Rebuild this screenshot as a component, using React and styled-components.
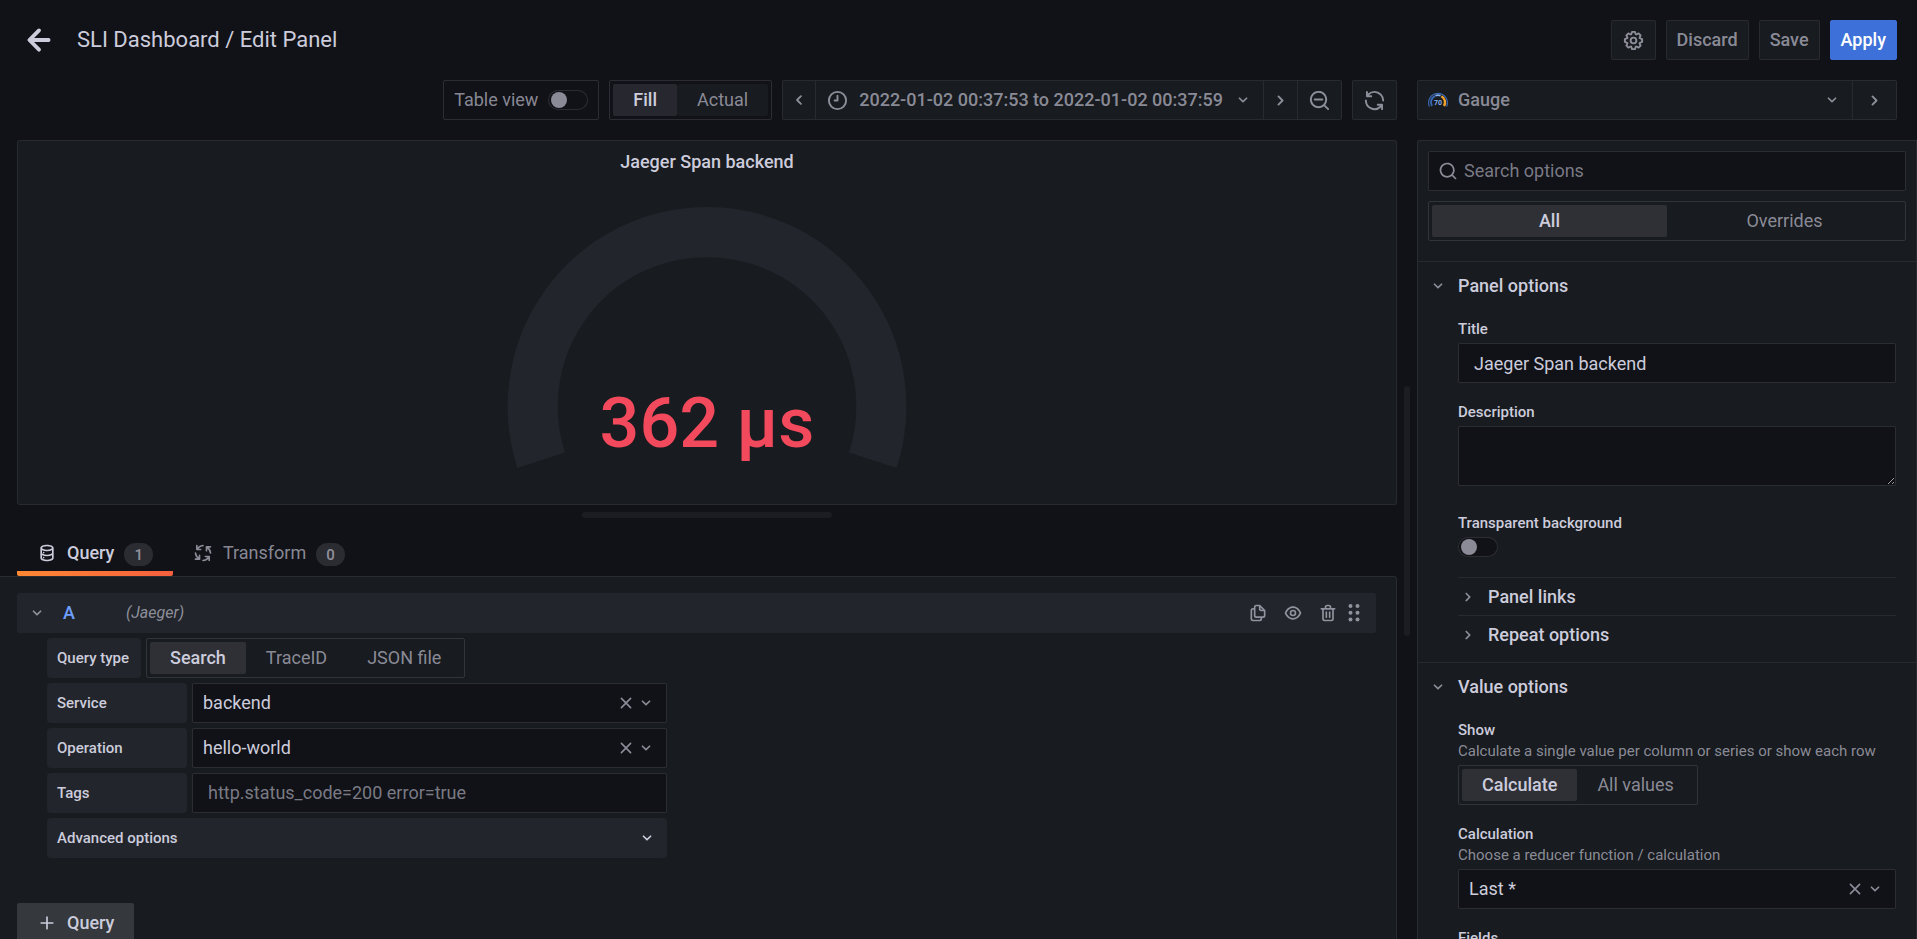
import React, { useState } from "react";
import styled, { createGlobalStyle, css, ThemeProvider } from "styled-components";

const theme = {
  canvas: "#111217",
  primary: "#181b1f",
  secondary: "#22252b",
  text: "rgb(204, 204, 220)",
  textMuted: "rgba(204, 204, 220, 0.65)",
  textDisabled: "rgba(204, 204, 220, 0.57)",
  borderWeak: "rgba(204, 204, 220, 0.09)",
  border: "rgba(204, 204, 220, 0.15)",
  active: "rgba(204, 204, 220, 0.12)",
};

const GlobalStyle = createGlobalStyle`
  *, *::before, *::after { box-sizing: border-box; }
  body {
    margin: 0;
    background: ${theme.canvas};
    color: ${theme.text};
    font-family: Roboto, "Liberation Sans", sans-serif;
    font-size: 18px;
    line-height: 24px;
  }
  button, input, select, textarea { font: inherit; color: inherit; margin: 0; }
  h1, h2, h3, p { margin: 0; font: inherit; }
`;

/* ---------- icons ---------- */

const paths = {
  arrowLeft:
    "M17,11H9.41l3.3-3.29a1,1,0,1,0-1.42-1.42l-5,5a1,1,0,0,0-.21.33,1,1,0,0,0,0,.76,1,1,0,0,0,.21.33l5,5a1,1,0,0,0,1.42,0,1,1,0,0,0,0-1.42L9.41,13H17a1,1,0,0,0,0-2Z",
  angleDown:
    "M17,9.17a1,1,0,0,0-1.41,0L12,12.71,8.46,9.17a1,1,0,0,0-1.41,0,1,1,0,0,0,0,1.42l4.24,4.24a1,1,0,0,0,1.42,0L17,10.59A1,1,0,0,0,17,9.17Z",
  angleRight:
    "M14.83,11.29,10.59,7.05a1,1,0,0,0-1.42,0,1,1,0,0,0,0,1.41L12.71,12,9.17,15.54a1,1,0,0,0,0,1.41,1,1,0,0,0,.71.29,1,1,0,0,0,.71-.29l4.24-4.24A1,1,0,0,0,14.83,11.29Z",
  angleLeft:
    "M11.29,12l3.54-3.54a1,1,0,0,0,0-1.41,1,1,0,0,0-1.42,0L9.17,11.29a1,1,0,0,0,0,1.42L13.41,17a1,1,0,0,0,.71.29,1,1,0,0,0,.71-.29,1,1,0,0,0,0-1.41Z",
  cog: "M21.32,9.55l-1.89-.63.89-1.78A1,1,0,0,0,20.13,6L18,3.87a1,1,0,0,0-1.15-.19l-1.78.89-.63-1.89A1,1,0,0,0,13.5,2h-3a1,1,0,0,0-.95.68L8.92,4.57,7.14,3.68A1,1,0,0,0,6,3.87L3.87,6a1,1,0,0,0-.19,1.15l.89,1.78-1.89.63A1,1,0,0,0,2,10.5v3a1,1,0,0,0,.68.95l1.89.63-.89,1.78A1,1,0,0,0,3.87,18L6,20.13a1,1,0,0,0,1.15.19l1.78-.89.63,1.89a1,1,0,0,0,.95.68h3a1,1,0,0,0,.95-.68l.63-1.89,1.78.89A1,1,0,0,0,18,20.13L20.13,18a1,1,0,0,0,.19-1.15l-.89-1.78,1.89-.63A1,1,0,0,0,22,13.5v-3A1,1,0,0,0,21.32,9.55ZM20,12.78l-1.2.4A2,2,0,0,0,17.64,16l.57,1.14-1.1,1.1L16,17.64a2,2,0,0,0-2.79,1.16l-.4,1.2H11.22l-.4-1.2A2,2,0,0,0,8,17.64l-1.14.57-1.1-1.1L6.36,16A2,2,0,0,0,5.2,13.18L4,12.78V11.22l1.2-.4A2,2,0,0,0,6.36,8L5.79,6.89l1.1-1.1L8,6.36A2,2,0,0,0,10.82,5.2l.4-1.2h1.56l.4,1.2A2,2,0,0,0,16,6.36l1.14-.57,1.1,1.1L17.64,8a2,2,0,0,0,1.16,2.79l1.2.4ZM12,8a4,4,0,1,0,4,4A4,4,0,0,0,12,8Zm0,6a2,2,0,1,1,2-2A2,2,0,0,1,12,14Z",
  clock:
    "M12,2A10,10,0,1,0,22,12,10,10,0,0,0,12,2Zm0,18a8,8,0,1,1,8-8A8,8,0,0,1,12,20ZM12,6a1,1,0,0,0-1,1v4H9a1,1,0,0,0,0,2h3a1,1,0,0,0,1-1V7A1,1,0,0,0,12,6Z",
  search:
    "M21.71,20.29,18,16.61A9,9,0,1,0,16.61,18l3.68,3.68a1,1,0,0,0,1.42,0A1,1,0,0,0,21.71,20.29ZM11,18a7,7,0,1,1,7-7A7,7,0,0,1,11,18Z",
  searchMinus:
    "M21.71,20.29,18,16.61A9,9,0,1,0,16.61,18l3.68,3.68a1,1,0,0,0,1.42,0A1,1,0,0,0,21.71,20.29ZM11,18a7,7,0,1,1,7-7A7,7,0,0,1,11,18Zm4-8H7a1,1,0,0,0,0,2h8a1,1,0,0,0,0-2Z",
  sync: "M19.91,15.51H15.38a1,1,0,0,0,0,2h2.4A8,8,0,0,1,4,12a1,1,0,0,0-2,0,10,10,0,0,0,16.88,7.23V21a1,1,0,0,0,2,0V16.5A1,1,0,0,0,19.91,15.51ZM12,2A10,10,0,0,0,5.12,4.77V3a1,1,0,0,0-2,0V7.5a1,1,0,0,0,1,1h4.5a1,1,0,0,0,0-2H6.22A8,8,0,0,1,20,12a1,1,0,0,0,2,0A10,10,0,0,0,12,2Z",
  copy: "M21,8.94a1.31,1.31,0,0,0-.06-.27l0-.09a1.07,1.07,0,0,0-.19-.28h0l-6-6h0a1.07,1.07,0,0,0-.28-.19.32.32,0,0,0-.09,0A.88.88,0,0,0,14.05,2H10A3,3,0,0,0,7,5V6H6A3,3,0,0,0,3,9V19a3,3,0,0,0,3,3h8a3,3,0,0,0,3-3V18h1a3,3,0,0,0,3-3V9S21,9,21,8.94ZM15,5.41,17.59,8H16a1,1,0,0,1-1-1ZM15,19a1,1,0,0,1-1,1H6a1,1,0,0,1-1-1V9A1,1,0,0,1,6,8H7v7a3,3,0,0,0,3,3h5Zm4-4a1,1,0,0,1-1,1H10a1,1,0,0,1-1-1V5a1,1,0,0,1,1-1h3V7a3,3,0,0,0,3,3h3Z",
  eye: "M21.92,11.6C19.9,6.91,16.1,4,12,4S4.1,6.91,2.08,11.6a1,1,0,0,0,0,.8C4.1,17.09,7.9,20,12,20s7.9-2.91,9.92-7.6A1,1,0,0,0,21.92,11.6ZM12,18c-3.17,0-6.17-2.29-7.9-6C5.83,8.29,8.83,6,12,6s6.17,2.29,7.9,6C18.17,15.71,15.17,18,12,18ZM12,8a4,4,0,1,0,4,4A4,4,0,0,0,12,8Zm0,6a2,2,0,1,1,2-2A2,2,0,0,1,12,14Z",
  trash:
    "M10,18a1,1,0,0,0,1-1V11a1,1,0,0,0-2,0v6A1,1,0,0,0,10,18ZM20,6H16V5a3,3,0,0,0-3-3H11A3,3,0,0,0,8,5V6H4A1,1,0,0,0,4,8H5V19a3,3,0,0,0,3,3h8a3,3,0,0,0,3-3V8h1a1,1,0,0,0,0-2ZM10,5a1,1,0,0,1,1-1h2a1,1,0,0,1,1,1V6H10Zm7,14a1,1,0,0,1-1,1H8a1,1,0,0,1-1-1V8H17Zm-3-1a1,1,0,0,0,1-1V11a1,1,0,0,0-2,0v6A1,1,0,0,0,14,18Z",
  database:
    "M8,16.5a1,1,0,1,0,1,1A1,1,0,0,0,8,16.5ZM12,2C8,2,4,3.37,4,6V18c0,2.63,4,4,8,4s8-1.37,8-4V6C20,3.37,16,2,12,2Zm6,16c0,.71-2.28,2-6,2s-6-1.29-6-2V14.73A13.16,13.16,0,0,0,12,16a13.16,13.16,0,0,0,6-1.27Zm0-6c0,.71-2.28,2-6,2s-6-1.29-6-2V8.73A13.16,13.16,0,0,0,12,10a13.16,13.16,0,0,0,6-1.27ZM12,8C8.28,8,6,6.71,6,6s2.28-2,6-2,6,1.29,6,2S15.72,8,12,8ZM8,10.5a1,1,0,1,0,1,1A1,1,0,0,0,8,10.5Z",
  plus: "M19,11H13V5a1,1,0,0,0-2,0v6H5a1,1,0,0,0,0,2h6v6a1,1,0,0,0,2,0V13h6a1,1,0,0,0,0-2Z",
};

const Svg = styled.svg`
  display: block;
  flex: none;
`;

const Icon = ({ name, size = 20 }) => (
  <Svg width={size} height={size} viewBox="0 0 24 24" fill="currentColor" aria-hidden="true">
    <path d={paths[name]} />
  </Svg>
);

const TimesIcon = () => (
  <Svg width="20" height="20" viewBox="0 0 24 24" stroke="currentColor" strokeWidth="2" strokeLinecap="round" aria-hidden="true">
    <path d="M6.5 6.5l11 11M17.5 6.5l-11 11" />
  </Svg>
);

const DotsIcon = () => (
  <Svg width="14" height="20" viewBox="0 0 14 20" fill="currentColor" aria-hidden="true">
    {[3.5, 10.5].map((x) => [3, 9.7, 16.4].map((y) => <circle key={`${x}-${y}`} cx={x} cy={y} r="2" />))}
  </Svg>
);

const ProcessIcon = () => (
  <Svg width="20" height="20" viewBox="0 0 24 24" fill="none" stroke="currentColor" strokeWidth="2" strokeLinecap="round" strokeLinejoin="round" aria-hidden="true">
    {[0, 90, 180, 270].map((turn) => (
      <path key={turn} transform={`rotate(${turn} 12 12)`} d="M4.6 3v4.8h4.6M5 7.4A9 9 0 0 1 12 3" />
    ))}
  </Svg>
);

const GaugeLogo = () => (
  <Svg width="20" height="20" viewBox="0 0 20 20" fill="none" aria-hidden="true">
    <path d="M1.4 16.6A9.4 9.4 0 1 1 18.6 16.6" stroke="#3865ab" strokeWidth="1.2" />
    <path d="M4 16A7 7 0 0 1 7 6" stroke="#3865ab" strokeWidth="2" />
    <path d="M7.4 5.7a7 7 0 0 1 5.2 0" stroke="#84aff1" strokeWidth="1.8" />
    <path d="M13.4 6.2A7 7 0 0 1 16 16" stroke="#f2a32c" strokeWidth="2.4" />
    <text x="10" y="14.6" textAnchor="middle" fontSize="7" fontWeight="700" fill="#84aff1">70</text>
  </Svg>
);

/* ---------- shared controls ---------- */

const buttonReset = css`
  display: flex;
  align-items: center;
  border: 0;
  padding: 0;
  background: none;
  cursor: pointer;
`;

const ToolbarButton = styled.button`
  ${buttonReset}
  flex: none;
  justify-content: center;
  height: 40px;
  padding: 0 10px;
  border: 1px solid ${(p) => (p.$primary ? "#3d71d9" : p.theme.borderWeak)};
  border-radius: 2px;
  background: ${(p) => (p.$primary ? "#3d71d9" : p.theme.primary)};
  color: ${(p) => (p.$primary ? "#fff" : p.theme.textMuted)};
  font-weight: 500;
  white-space: nowrap;
`;

const ButtonGroup = styled.div`
  display: flex;
  min-width: 0;
  & > button { border-radius: 0; }
  & > button + button { border-left: 0; }
  & > button:first-child { border-radius: 2px 0 0 2px; }
  & > button:last-child { border-radius: 0 2px 2px 0; }
`;

const StepButton = styled(ToolbarButton)`
  padding: 0 5px;
`;

const TimeButton = styled(ToolbarButton)`
  gap: 10px;
`;

const VizButton = styled(ToolbarButton)`
  flex: 1;
  gap: 10px;
  justify-content: flex-start;
`;

const Grow = styled.span`
  flex: 1;
  min-width: 0;
  text-align: left;
`;

const IconButton = styled.button`
  ${buttonReset}
  color: ${(p) => p.theme.textMuted};
`;

const Switch = styled.input`
  appearance: none;
  display: block;
  flex: none;
  width: 40px;
  height: 20px;
  padding: 1px 2px;
  border: 1px solid ${(p) => p.theme.border};
  border-radius: 10px;
  background: ${(p) => p.theme.canvas};
  cursor: pointer;
  &::before {
    content: "";
    display: block;
    width: 16px;
    height: 16px;
    border-radius: 50%;
    background: #8b8a97;
  }
  &:checked::before { margin-left: auto; }
`;

const RadioBox = styled.div`
  display: flex;
  width: ${(p) => (p.$full ? "100%" : "max-content")};
  height: 40px;
  padding: 3px;
  border: 1px solid ${(p) => p.theme.border};
  border-radius: 2px;
`;

const RadioLabel = styled.label`
  display: flex;
  flex: ${(p) => (p.$full ? "1" : "none")};
  align-items: center;
  justify-content: center;
  padding: 0 20px;
  border-radius: 2px;
  background: ${(p) => (p.$filled ? p.theme.primary : "none")};
  color: ${(p) => p.theme.textMuted};
  cursor: pointer;
  &:has(input:checked) {
    background: ${(p) => p.theme.active};
    color: ${(p) => p.theme.text};
    font-weight: 500;
  }
`;

const HiddenRadio = styled.input`
  position: absolute;
  opacity: 0;
  width: 1px;
  height: 1px;
`;

const RadioGroup = ({ name, label, options, full, filled }) => {
  const [value, setValue] = useState(options[0]);
  return (
    <RadioBox role="radiogroup" aria-label={label} $full={full}>
      {options.map((option) => (
        <RadioLabel key={option} $full={full} $filled={filled}>
          <HiddenRadio type="radio" name={name} checked={value === option} onChange={() => setValue(option)} />
          {option}
        </RadioLabel>
      ))}
    </RadioBox>
  );
};

const fieldBox = css`
  width: 100%;
  border: 1px solid ${(p) => p.theme.border};
  border-radius: 2px;
  background: ${(p) => p.theme.canvas};
`;

const TextInput = styled.input`
  ${fieldBox}
  display: block;
  height: 40px;
  padding: 0 15px;
  outline: none;
  &::placeholder { color: ${(p) => p.theme.textDisabled}; opacity: 1; }
`;

const TextArea = styled.textarea`
  ${fieldBox}
  display: block;
  height: 60px;
  margin-bottom: 8px;
  padding: 5px 10px;
  resize: vertical;
  outline: none;
`;

const SelectBox = styled.div`
  ${fieldBox}
  display: flex;
  align-items: center;
  height: 40px;
  padding-right: 10px;
  color: ${(p) => p.theme.textMuted};
`;

const NativeSelect = styled.select`
  appearance: none;
  flex: 1;
  min-width: 0;
  height: 38px;
  padding: 0 10px;
  border: 0;
  outline: none;
  background: none;
  color: ${(p) => p.theme.text};
`;

const Select = ({ id, value }) => (
  <SelectBox>
    <NativeSelect id={id} defaultValue={value}>
      <option>{value}</option>
    </NativeSelect>
    <IconButton type="button" aria-label="Clear value"><TimesIcon /></IconButton>
    <Icon name="angleDown" />
  </SelectBox>
);

/* ---------- page frame ---------- */

const Page = styled.div`
  display: flex;
  flex-direction: column;
  height: 100vh;
  overflow: hidden;
`;

const Header = styled.header`
  display: flex;
  align-items: center;
  gap: 10px;
  flex: none;
  padding: 20px 20px 20px 16px;
`;

const BackButton = styled.button`
  ${buttonReset}
  justify-content: center;
  height: 40px;
  color: ${(p) => p.theme.text};
`;

const PageTitle = styled.h1`
  flex: 1;
  padding-left: 5px;
  font-size: 22px;
  line-height: 30px;
`;

const Body = styled.div`
  display: flex;
  flex: 1;
  min-height: 0;
`;

const MainColumn = styled.main`
  display: flex;
  flex: 1;
  flex-direction: column;
  min-width: 0;
`;

const Toolbar = styled.div`
  display: flex;
  flex: none;
  justify-content: flex-end;
  gap: 10px;
  padding-bottom: 20px;
`;

const TableViewBox = styled.label`
  display: flex;
  align-items: center;
  gap: 10px;
  height: 40px;
  padding: 0 10px;
  border: 1px solid ${(p) => p.theme.border};
  border-radius: 2px;
  color: ${(p) => p.theme.textMuted};
`;

const PanelCard = styled.section`
  display: flex;
  flex: 1;
  flex-direction: column;
  align-items: center;
  min-height: 0;
  margin-left: 17px;
  border: 1px solid ${(p) => p.theme.borderWeak};
  border-radius: 3px;
  background: ${(p) => p.theme.primary};
`;

const PanelTitle = styled.h2`
  padding: 9px 8px 7px;
  font-size: 18px;
  font-weight: 500;
`;

const GaugeSvg = styled.svg`
  display: block;
  flex: 1;
  width: 100%;
  min-height: 0;
  padding: 26px 0 34px;
`;

const GaugeChart = () => (
  <GaugeSvg viewBox="0 0 400 262" role="img" aria-label="362 µs">
    <path d="M34.5 252.8A174 174 0 1 1 365.5 252.8" fill="none" stroke={theme.secondary} strokeWidth="50" />
    <text x="200" y="240" textAnchor="middle" fontSize="70" fontWeight="500" fill="#f2495c">362 µs</text>
  </GaugeSvg>
);

const RowSplitter = styled.div`
  display: flex;
  flex: none;
  justify-content: center;
  height: 20px;
  padding: 7px 0 7px 17px;
`;

const ColumnSplitter = styled.div`
  display: flex;
  flex: none;
  align-items: center;
  justify-content: center;
  width: 20px;
  padding-top: 2px;
`;

const SplitterHandle = styled.div`
  width: ${(p) => (p.$vertical ? "6px" : "250px")};
  height: ${(p) => (p.$vertical ? "250px" : "6px")};
  border-radius: 3px;
  background: #1c1d22;
`;

const TabBar = styled.div`
  display: flex;
  flex: none;
  height: 51px;
  padding-left: 17px;
`;

const Tab = styled.button`
  ${buttonReset}
  gap: 10px;
  padding: 10px 20px 0;
  border-bottom: 5px solid transparent;
  color: ${(p) => (p.$active ? p.theme.text : p.theme.textMuted)};
  font-weight: ${(p) => (p.$active ? 500 : 400)};
  ${(p) => p.$active && css`
    background: linear-gradient(270deg, #f55f3e 0%, #ff8833 100%) bottom / 100% 5px no-repeat border-box;
    border-radius: 2px;
  `}
`;

const Counter = styled.span`
  margin-top: 3px;
  padding: 2px 10px 1px;
  border-radius: 12px;
  background: #2b2c31;
  color: ${(p) => p.theme.textMuted};
  font-size: 15px;
  line-height: 20px;
  font-weight: 500;
`;

/* ---------- query editor ---------- */

const QueryPane = styled.section`
  flex: 1;
  min-height: 0;
  overflow: hidden;
  border: 1px solid ${(p) => p.theme.borderWeak};
  border-width: 1px 1px 0 0;
  border-radius: 0 3px 0 0;
  background: ${(p) => p.theme.primary};
`;

const QueryContent = styled.div`
  display: flex;
  flex-direction: column;
  padding: 16px 20px 20px 17px;
`;

const QueryHeader = styled.div`
  display: flex;
  flex: none;
  align-items: center;
  height: 40px;
  padding: 0 15px 0 10px;
  border-radius: 2px;
  background: ${(p) => p.theme.secondary};
  color: ${(p) => p.theme.textMuted};
`;

const QueryName = styled.h3`
  padding: 0 51px 0 16px;
  color: #6e9fff;
  font-weight: 500;
`;

const SourceName = styled.em`
  flex: 1;
  font-size: 16px;
`;

const QueryActions = styled.div`
  display: flex;
  align-items: center;
  gap: 15px;
  & > button:last-child { margin-left: -6px; }
`;

const QueryForm = styled.form`
  display: flex;
  flex-direction: column;
  gap: 5px;
  width: 650px;
  max-width: 100%;
  padding: 5px 0 45px 30px;
`;

const FormRow = styled.div`
  display: flex;
  gap: 5px;
`;

const labelBox = css`
  display: flex;
  flex: none;
  align-items: center;
  height: 40px;
  padding: 0 10px;
  border-radius: 4px;
  background: ${(p) => p.theme.secondary};
  color: ${(p) => p.theme.text};
  font-size: 15px;
  font-weight: 500;
`;

const InlineLabel = styled.label`
  ${labelBox}
  width: ${(p) => (p.$narrow ? "94px" : "140px")};
`;

const AdvancedToggle = styled.button`
  ${labelBox}
  justify-content: space-between;
  border: 0;
  cursor: pointer;
`;

const AddQueryButton = styled.button`
  ${buttonReset}
  flex: none;
  align-self: flex-start;
  gap: 10px;
  height: 40px;
  padding: 0 20px;
  border-radius: 2px;
  background: #35383d;
  font-weight: 500;
`;

/* ---------- options pane ---------- */

const SideColumn = styled.aside`
  display: flex;
  flex: none;
  flex-direction: column;
  width: 500px;
`;

const VizPicker = styled.div`
  flex: none;
  padding: 0 20px 20px 0;
`;

const OptionsPane = styled.div`
  flex: 1;
  min-height: 0;
  overflow: hidden;
  border: 1px solid ${(p) => p.theme.borderWeak};
  border-bottom: 0;
  border-radius: 3px 0 0 0;
  background: ${(p) => p.theme.primary};
`;

const OptionsTop = styled.div`
  display: flex;
  flex-direction: column;
  gap: 10px;
  padding: 10px 10px 20px;
`;

const SearchBox = styled.label`
  ${fieldBox}
  display: flex;
  align-items: center;
  gap: 6px;
  height: 40px;
  padding: 0 9px;
  color: ${(p) => p.theme.textMuted};
`;

const SearchInput = styled.input`
  flex: 1;
  min-width: 0;
  padding: 0;
  border: 0;
  outline: none;
  background: none;
  &::placeholder { color: ${(p) => p.theme.textDisabled}; opacity: 1; }
`;

const Section = styled.section`
  border-top: 1px solid ${(p) => p.theme.borderWeak};
`;

const SectionToggle = styled.button`
  ${buttonReset}
  width: 100%;
  gap: 10px;
  height: ${(p) => (p.$nested ? "37px" : "48px")};
  padding: 0 ${(p) => (p.$nested ? "0" : "10px")};
  font-weight: 500;
  & > svg { color: ${(p) => p.theme.textMuted}; }
`;

const SectionBody = styled.div`
  padding: 10px 20px 9px 40px;
`;

const Field = styled.div`
  display: flow-root;
  margin-bottom: 20px;
`;

const FieldLabel = styled.label`
  display: block;
  margin-bottom: 5px;
  font-size: 15px;
  line-height: 18px;
  font-weight: 500;
`;

const FieldHelp = styled.span`
  display: block;
  margin-top: 3px;
  color: ${(p) => p.theme.textMuted};
  font-weight: 400;
  white-space: nowrap;
`;

export default function App() {
  return (
    <ThemeProvider theme={theme}>
      <GlobalStyle />
      <Page>
        <Header>
          <BackButton type="button" aria-label="Go back"><Icon name="arrowLeft" size={46} /></BackButton>
          <PageTitle>SLI Dashboard / Edit Panel</PageTitle>
          <ToolbarButton type="button" aria-label="Dashboard settings"><Icon name="cog" size={23} /></ToolbarButton>
          <ToolbarButton type="button">Discard</ToolbarButton>
          <ToolbarButton type="button">Save</ToolbarButton>
          <ToolbarButton type="button" $primary>Apply</ToolbarButton>
        </Header>

        <Body>
          <MainColumn>
            <Toolbar>
              <TableViewBox>
                Table view
                <Switch type="checkbox" />
              </TableViewBox>
              <RadioGroup name="size" label="Panel size" options={["Fill", "Actual"]} filled />
              <ButtonGroup>
                <StepButton type="button" aria-label="Earlier"><Icon name="angleLeft" size={22} /></StepButton>
                <TimeButton type="button">
                  <Icon name="clock" size={23} />
                  2022-01-02 00:37:53 to 2022-01-02 00:37:59
                  <Icon name="angleDown" />
                </TimeButton>
                <StepButton type="button" aria-label="Later"><Icon name="angleRight" size={23} /></StepButton>
                <ToolbarButton type="button" aria-label="Zoom out"><Icon name="searchMinus" size={23} /></ToolbarButton>
              </ButtonGroup>
              <ToolbarButton type="button" aria-label="Refresh"><Icon name="sync" size={23} /></ToolbarButton>
            </Toolbar>

            <PanelCard>
              <PanelTitle>Jaeger Span backend</PanelTitle>
              <GaugeChart />
            </PanelCard>

            <RowSplitter><SplitterHandle /></RowSplitter>

            <TabBar role="tablist">
              <Tab type="button" role="tab" aria-selected="true" $active>
                <Icon name="database" />Query<Counter>1</Counter>
              </Tab>
              <Tab type="button" role="tab" aria-selected="false">
                <ProcessIcon />Transform<Counter>0</Counter>
              </Tab>
            </TabBar>

            <QueryPane>
              <QueryContent>
                <QueryHeader>
                  <IconButton type="button" aria-label="Collapse query"><Icon name="angleDown" /></IconButton>
                  <QueryName>A</QueryName>
                  <SourceName>(Jaeger)</SourceName>
                  <QueryActions>
                    <IconButton type="button" aria-label="Duplicate query"><Icon name="copy" /></IconButton>
                    <IconButton type="button" aria-label="Toggle query"><Icon name="eye" /></IconButton>
                    <IconButton type="button" aria-label="Remove query"><Icon name="trash" /></IconButton>
                    <IconButton type="button" aria-label="Reorder query"><DotsIcon /></IconButton>
                  </QueryActions>
                </QueryHeader>
                <QueryForm>
                  <FormRow>
                    <InlineLabel as="span" $narrow>Query type</InlineLabel>
                    <RadioGroup name="type" label="Query type" options={["Search", "TraceID", "JSON file"]} />
                  </FormRow>
                  <FormRow>
                    <InlineLabel htmlFor="service">Service</InlineLabel>
                    <Select id="service" value="backend" />
                  </FormRow>
                  <FormRow>
                    <InlineLabel htmlFor="operation">Operation</InlineLabel>
                    <Select id="operation" value="hello-world" />
                  </FormRow>
                  <FormRow>
                    <InlineLabel htmlFor="tags">Tags</InlineLabel>
                    <TextInput id="tags" placeholder="http.status_code=200 error=true" />
                  </FormRow>
                  <AdvancedToggle type="button">
                    Advanced options
                    <Icon name="angleDown" />
                  </AdvancedToggle>
                </QueryForm>
                <AddQueryButton type="button"><Icon name="plus" />Query</AddQueryButton>
              </QueryContent>
            </QueryPane>
          </MainColumn>

          <ColumnSplitter><SplitterHandle $vertical /></ColumnSplitter>

          <SideColumn>
            <VizPicker>
              <ButtonGroup>
                <VizButton type="button">
                  <GaugeLogo />
                  <Grow>Gauge</Grow>
                  <Icon name="angleDown" />
                </VizButton>
                <ToolbarButton type="button" aria-label="Close options"><Icon name="angleRight" size={23} /></ToolbarButton>
              </ButtonGroup>
            </VizPicker>

            <OptionsPane>
              <OptionsTop>
                <SearchBox>
                  <Icon name="search" />
                  <SearchInput aria-label="Search options" placeholder="Search options" />
                </SearchBox>
                <RadioGroup name="scope" label="Options" options={["All", "Overrides"]} full />
              </OptionsTop>

              <Section>
                <SectionToggle type="button"><Icon name="angleDown" />Panel options</SectionToggle>
                <SectionBody>
                  <Field>
                    <FieldLabel htmlFor="title">Title</FieldLabel>
                    <TextInput id="title" defaultValue="Jaeger Span backend" />
                  </Field>
                  <Field>
                    <FieldLabel htmlFor="description">Description</FieldLabel>
                    <TextArea id="description" />
                  </Field>
                  <Field>
                    <FieldLabel htmlFor="transparent">Transparent background</FieldLabel>
                    <Switch id="transparent" type="checkbox" />
                  </Field>
                  <Section>
                    <SectionToggle type="button" $nested><Icon name="angleRight" />Panel links</SectionToggle>
                  </Section>
                  <Section>
                    <SectionToggle type="button" $nested><Icon name="angleRight" />Repeat options</SectionToggle>
                  </Section>
                </SectionBody>
              </Section>

              <Section>
                <SectionToggle type="button"><Icon name="angleDown" />Value options</SectionToggle>
                <SectionBody>
                  <Field>
                    <FieldLabel as="div">
                      Show
                      <FieldHelp>Calculate a single value per column or series or show each row</FieldHelp>
                    </FieldLabel>
                    <RadioGroup name="show" label="Show" options={["Calculate", "All values"]} />
                  </Field>
                  <Field>
                    <FieldLabel htmlFor="calculation">
                      Calculation
                      <FieldHelp>Choose a reducer function / calculation</FieldHelp>
                    </FieldLabel>
                    <Select id="calculation" value="Last *" />
                  </Field>
                  <Field>
                    <FieldLabel htmlFor="fields">Fields</FieldLabel>
                    <Select id="fields" value="Numeric Fields" />
                  </Field>
                </SectionBody>
              </Section>
            </OptionsPane>
          </SideColumn>
        </Body>
      </Page>
    </ThemeProvider>
  );
}
